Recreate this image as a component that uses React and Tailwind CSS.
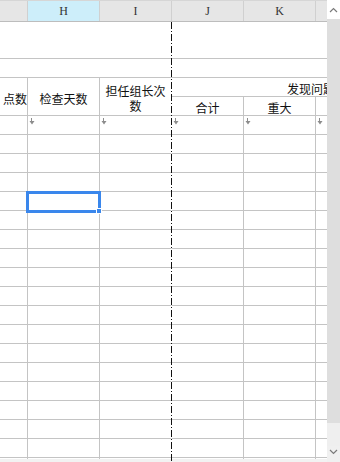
const line = 'border-[#c4c4c4]'

const FilterMark = () => (
  <svg className="absolute left-[1px] top-[2px]" width="6" height="7" viewBox="0 0 6 7">
    <path d="M2.5 0v3" stroke="#8c8c8c" strokeWidth="1" />
    <path d="M0.5 3h5L3 6.5z" fill="#8c8c8c" />
  </svg>
)

const Chevron = ({ up }) => (
  <svg width="9" height="6" viewBox="0 0 9 6">
    <path d={up ? 'M1 5l3.5-3.5L8 5' : 'M1 1l3.5 3.5L8 1'} fill="none" stroke="#7a7a7a" strokeWidth="1.2" />
  </svg>
)

const App = () => {
  const rows = Array.from({ length: 19 }, (_, i) => i)
  const cols = ['G', 'H', 'I', 'J', 'K', 'L']

  return (
    <div className="w-[340px] h-[462px] overflow-hidden flex bg-white font-['Noto_Sans_CJK_SC','Noto_Sans',sans-serif] text-[12px] text-[#111]">
      <div className="relative w-[327px] flex flex-col">
        {/* 列标题 */}
        <div className="h-[22px] flex border-t border-b border-t-[#d6d6d6] border-b-[#bdbdbd] bg-[#e6e6e6] font-['Liberation_Serif',serif] text-[12px] text-[#333] shrink-0">
          <div className="w-[28px] border-r border-[#d0d0d0]"></div>
          <div className="w-[72px] border-r border-[#d0d0d0] bg-[#cdeefa] flex items-center justify-center">H</div>
          <div className="w-[72px] border-r border-[#d0d0d0] flex items-center justify-center">I</div>
          <div className="w-[72px] border-r border-[#d0d0d0] flex items-center justify-center">J</div>
          <div className="w-[72px] border-r border-[#d0d0d0] flex items-center justify-center">K</div>
          <div className="w-[11px]"></div>
        </div>

        {/* 表格 */}
        <div className="h-[437px] overflow-hidden">
          <div className="grid grid-cols-[28px_72px_72px_72px_72px_11px] grid-rows-[37px_19px_19px_19px] auto-rows-[19px]">
            <div className={`col-span-6 border-b ${line}`}></div>
            <div className={`col-span-6 border-b ${line}`}></div>

            <div className={`row-span-2 border-r border-b ${line} flex items-center justify-end pt-[5px] overflow-hidden whitespace-nowrap`}>点数</div>
            <div className={`row-span-2 border-r border-b ${line} flex items-center justify-center pt-[5px]`}>检查天数</div>
            <div className={`row-span-2 border-b ${line} border-r border-r-white flex items-center justify-center text-center leading-[15px] px-[4px] pt-[2px]`}>担任组长次数</div>
            <div className={`col-span-3 border-b ${line} flex items-center pl-[115px] pt-[4px] whitespace-nowrap overflow-hidden`}>发现问题</div>
            <div className={`border-r border-b ${line} flex items-center justify-center pt-[4px]`}>合计</div>
            <div className={`border-r border-b ${line} flex items-center justify-center pt-[4px]`}>重大</div>
            <div className={`border-b ${line}`}></div>

            {rows.map((r) =>
              cols.map((c, ci) => (
                <div
                  key={`${r}-${c}`}
                  className={`relative border-b ${line} ${ci === 2 ? 'border-r border-r-white' : ci < 5 ? 'border-r' : ''}`}
                >
                  {r === 0 && ci > 0 && <FilterMark />}
                </div>
              ))
            )}
          </div>
        </div>
        <div className="h-[3px] bg-[#f2f2f2] shrink-0"></div>

        {/* 分页线 */}
        <svg className="absolute left-[171px] top-[22px]" width="1" height="440">
          <line x1="0.5" y1="0" x2="0.5" y2="440" stroke="#111" strokeWidth="1" strokeDasharray="7 2 1 2" />
        </svg>

        {/* 选中单元格 */}
        <div className="absolute left-[26px] top-[191px] w-[75px] h-[22px] border-[3px] border-[#3a87ec]">
          <span className="absolute right-[-4px] bottom-[-4px] w-[6px] h-[6px] bg-[#3a87ec] border border-white"></span>
        </div>
      </div>

      {/* 滚动条 */}
      <div className="w-[13px] flex flex-col bg-[#f0f0f0]">
        <div className="h-[19px] bg-white flex items-center justify-center">
          <Chevron up />
        </div>
        <div className="h-[404px] bg-[#dedede]"></div>
        <div className="flex-1 bg-[#efefef]"></div>
        <div className="h-[16px] flex items-start justify-center pt-[3px]">
          <Chevron />
        </div>
      </div>
    </div>
  )
}

export default App
